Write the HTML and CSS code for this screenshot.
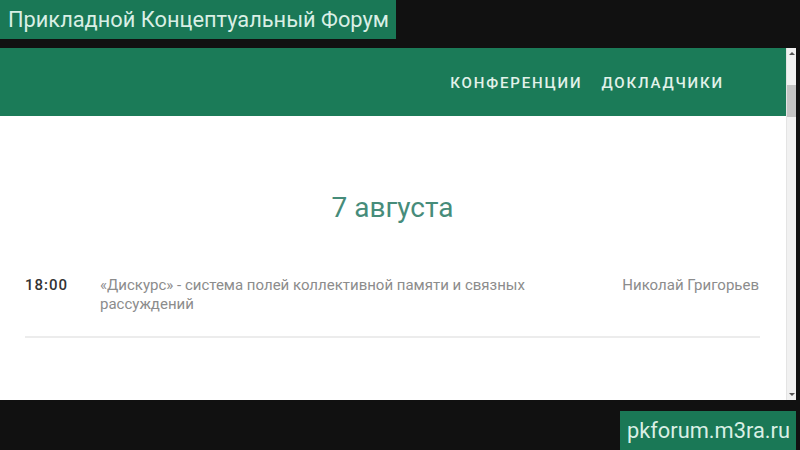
FILE: index.html
```html
<!DOCTYPE html>
<html lang="ru">
<head>
  <meta charset="UTF-8">
  <title>Прикладной Концептуальный Форум</title>
  <link rel="stylesheet" href="styles.css">
</head>
<body>
  <div class="caption caption-top">Прикладной Концептуальный Форум</div>

  <div class="window">
    <div class="page">
      <header class="site-header">
        <nav class="nav">
          <a href="#">Конференции</a>
          <a href="#">Докладчики</a>
        </nav>
      </header>
      <main class="schedule">
        <h2 class="day">7 августа</h2>
        <div class="talk">
          <div class="talk-time">18:00</div>
          <div class="talk-title">«Дискурс» - система полей коллективной памяти и связных рассуждений</div>
          <div class="talk-speaker">Николай Григорьев</div>
        </div>
      </main>
    </div>
    <div class="scrollbar">
      <span class="arrow up"></span>
      <span class="thumb"></span>
      <span class="arrow down"></span>
    </div>
  </div>

  <div class="footer-row">
    <div class="caption caption-bottom">pkforum.m3ra.ru</div>
  </div>
</body>
</html>
```

FILE: styles.css
```css
/* base */
body {
  margin: 0;
  background: #111111;
  font-family: Roboto, 'Noto Sans', sans-serif;
  width: 800px;
  height: 450px;
  overflow: hidden;
}

.caption {
  background: #1a7856;
  color: #d9efe5;
  font-size: 21.8px;
  line-height: 39px;
  height: 39px;
  box-sizing: border-box;
  white-space: nowrap;
}

.caption-top {
  display: inline-block;
  padding: 0 8px 0 8px;
  width: 396px;
}

.window {
  margin-top: 9px;
  height: 352px;
  width: 796px;
  display: flex;
  background: #ffffff;
}

.page {
  flex: 1;
  display: flex;
  flex-direction: column;
}

.site-header {
  background: #1b7b58;
  height: 68px;
  display: flex;
  align-items: center;
  justify-content: flex-end;
  padding-right: 62px;
}

.nav {
  display: flex;
  gap: 19px;
  padding-top: 2px;
}

.nav a {
  color: #e2f2ea;
  text-decoration: none;
  text-transform: uppercase;
  font-size: 15px;
  font-weight: 500;
  letter-spacing: 1.85px;
}

.schedule {
  padding: 0 26px 0 25px;
}

.day {
  margin: 74px 0 0;
  text-align: center;
  font-size: 28px;
  font-weight: 400;
  color: #468c7a;
  line-height: 36px;
}

.talk {
  display: flex;
  margin-top: 50px;
  padding-bottom: 22px;
  border-bottom: 2px solid #ececec;
  font-size: 15px;
  line-height: 19px;
}

.talk-time {
  width: 75px;
  color: #333333;
  font-weight: 500;
  letter-spacing: 1px;
}

.talk-title {
  width: 450px;
  color: #8c8c8c;
}

.talk-speaker {
  flex: 1;
  text-align: right;
  color: #8c8c8c;
  padding-right: 1px;
}

/* scrollbar */
.scrollbar {
  width: 9px;
  background: #f1f1f1;
  border-left: 1px solid #e4e4e4;
  display: flex;
  flex-direction: column;
  align-items: center;
}

.arrow {
  width: 0;
  height: 0;
  border-left: 3px solid transparent;
  border-right: 3px solid transparent;
  margin: 4px 0;
}

.arrow.up {
  border-bottom: 3px solid #555;
}

.arrow.down {
  border-top: 3px solid #555;
  margin-top: auto;
}

.thumb {
  width: 100%;
  height: 32px;
  background: #c4c4c4;
  margin-top: 26px;
}

.footer-row {
  display: flex;
  justify-content: flex-end;
  padding-right: 4px;
  margin-top: 11px;
}

.caption-bottom {
  padding: 0 6px 0 7px;
  width: 176px;
  font-size: 21.8px;
}
```
